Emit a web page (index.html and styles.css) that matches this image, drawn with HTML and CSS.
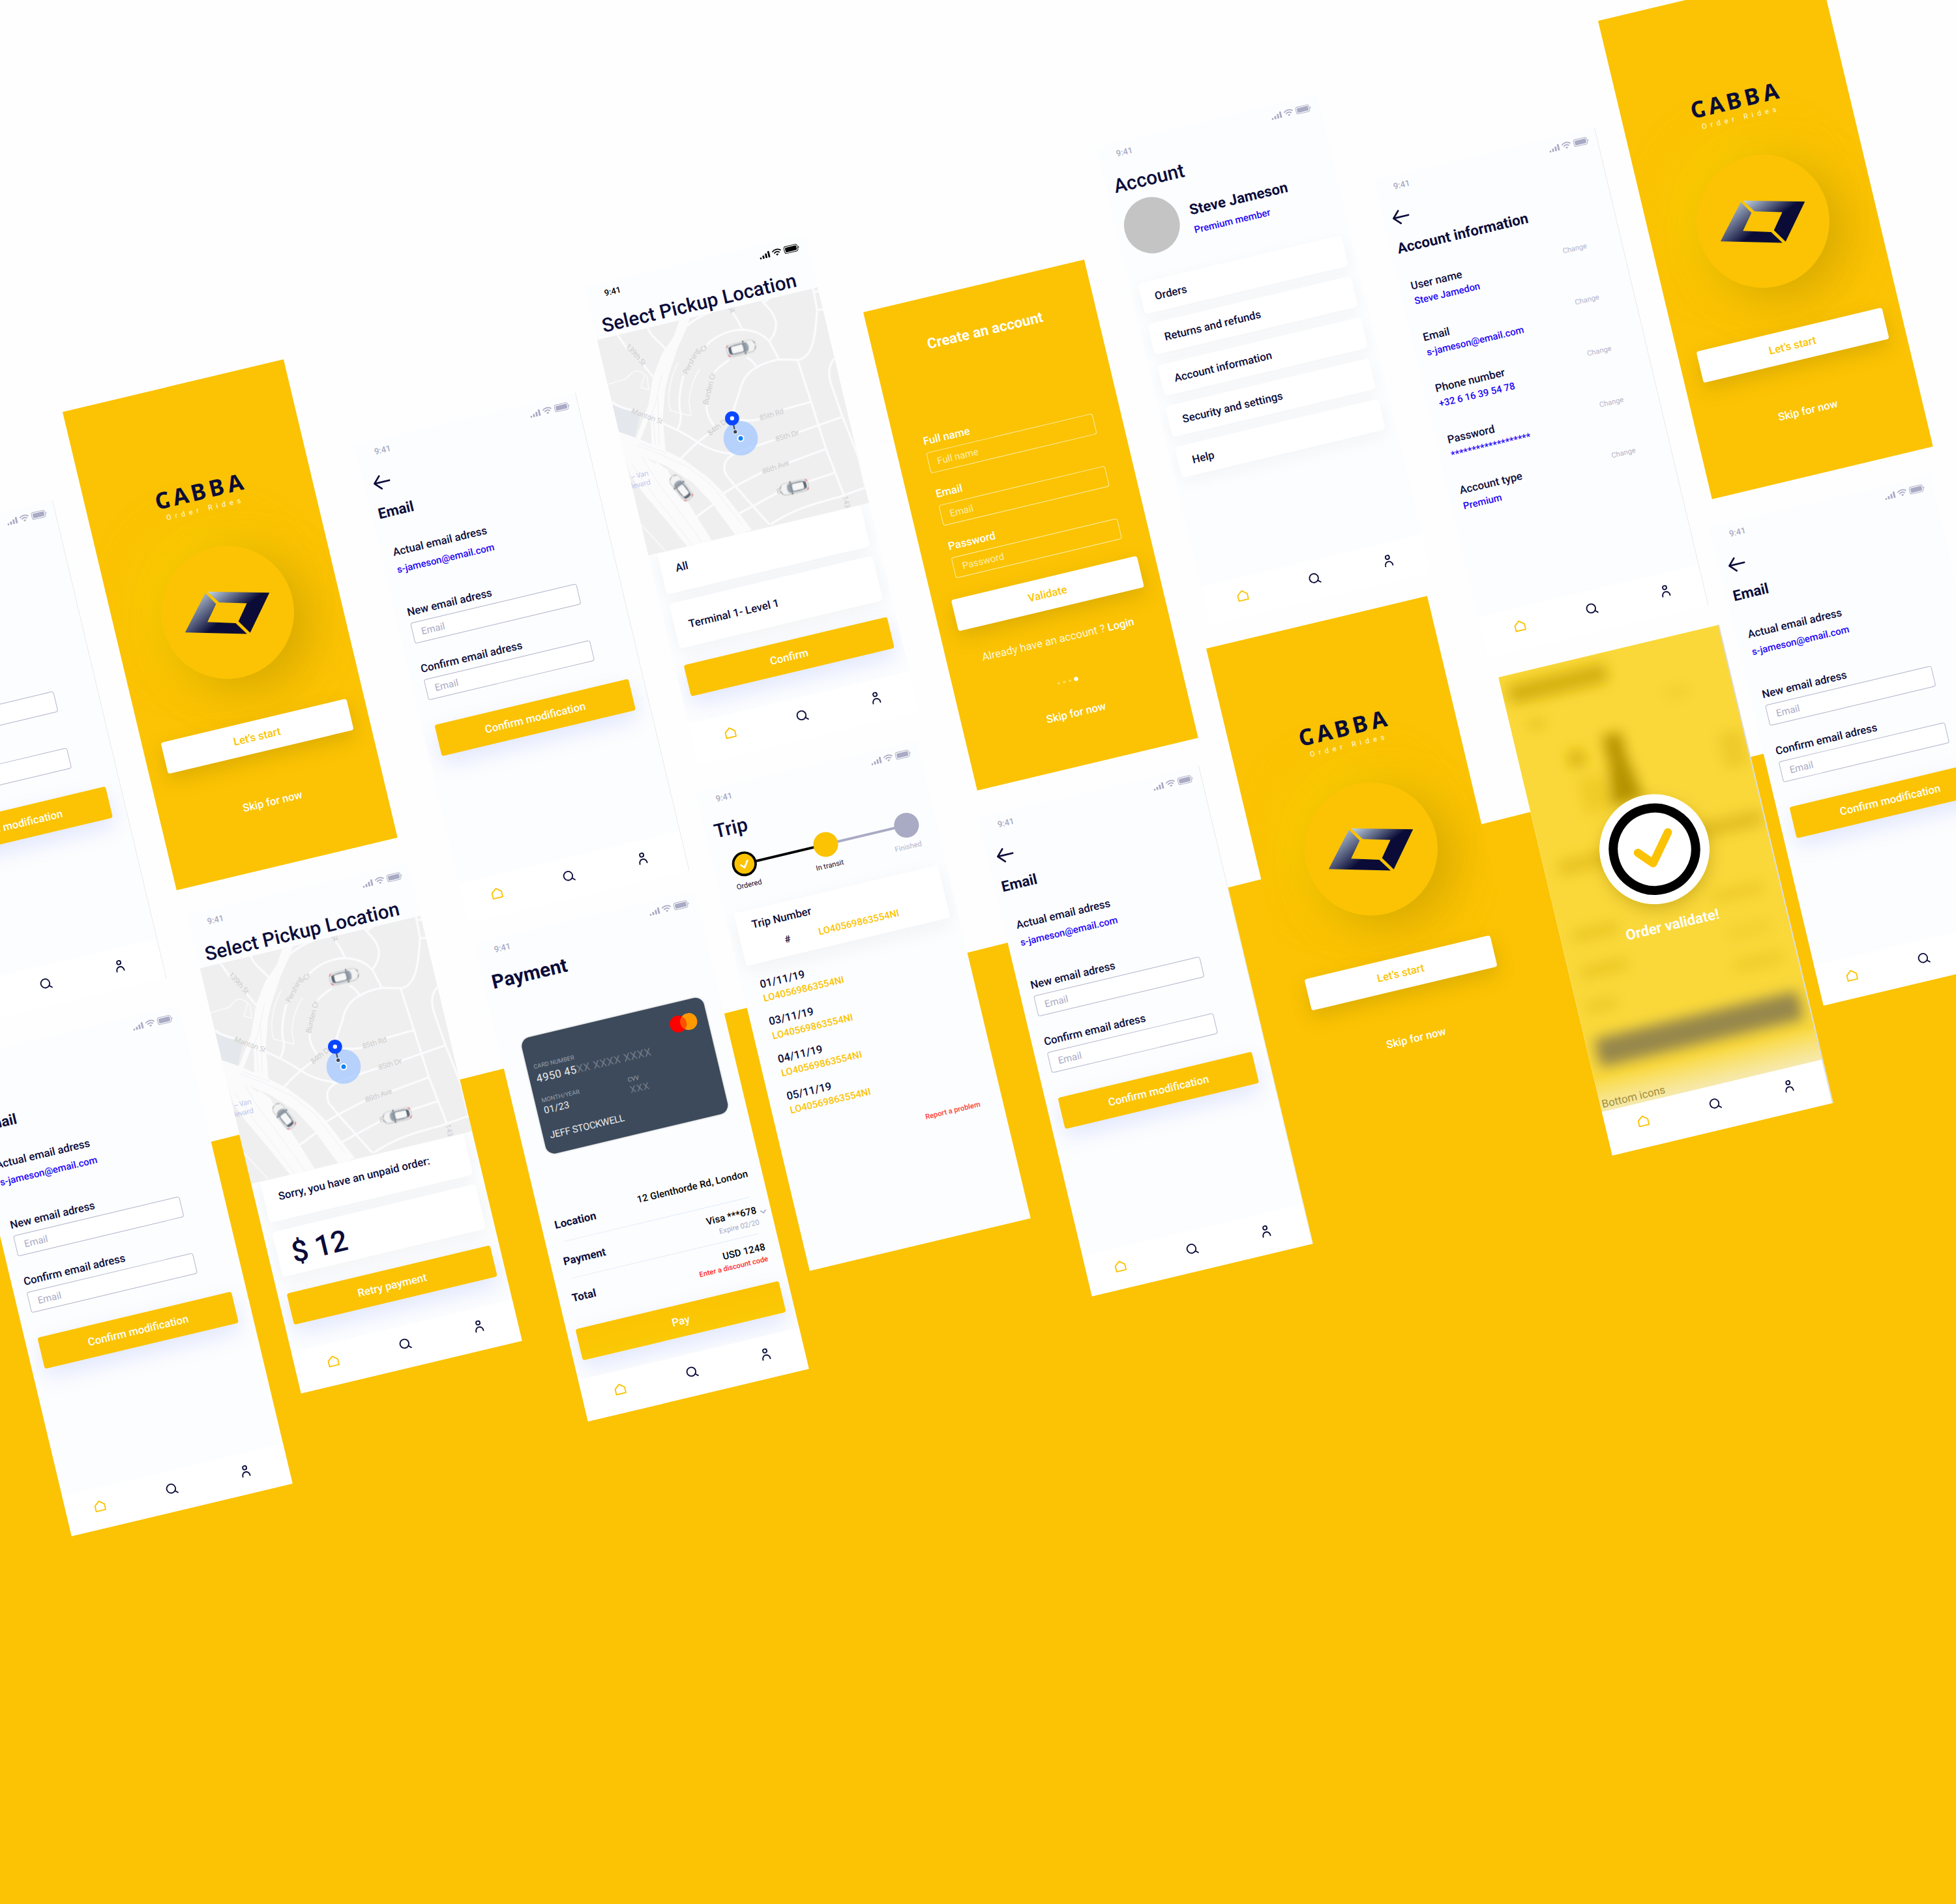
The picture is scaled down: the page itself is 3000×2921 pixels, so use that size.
FILE: index.html
```html
<!DOCTYPE html>
<html lang="en">
<head>
<meta charset="utf-8">
<title>Cabba – Order Rides</title>
<link rel="stylesheet" href="styles.css">
</head>
<body>
<svg class="defs" width="0" height="0" aria-hidden="true">
  <defs>
    <linearGradient id="steel" gradientUnits="userSpaceOnUse" x1="82" y1="70" x2="112" y2="140">
      <stop offset="0" stop-color="#c9dcea"/><stop offset=".75" stop-color="#0a0c37"/>
    </linearGradient>
    <linearGradient id="steel2" gradientUnits="userSpaceOnUse" x1="48" y1="70" x2="82" y2="138">
      <stop offset="0" stop-color="#cfe2ee"/><stop offset=".9" stop-color="#0a0c37"/>
    </linearGradient>
    <linearGradient id="glass" x1="0" x2="1" y1="0" y2="0">
      <stop offset="0" stop-color="#56626f"/><stop offset=".6" stop-color="#6c7884"/><stop offset="1" stop-color="#a9b2bb"/>
    </linearGradient>
    <linearGradient id="fade" x1="0" x2="0" y1="0" y2="1">
      <stop offset="0" stop-color="#f7eebb" stop-opacity="0"/><stop offset="1" stop-color="#f6e9ae"/>
    </linearGradient>
    <filter id="soft" x="-20%" y="-20%" width="140%" height="140%"><feGaussianBlur stdDeviation="11"/></filter>
  </defs>

  <symbol id="status" viewBox="0 0 68 14">
    <g fill="currentColor">
      <rect x="0" y="9.6" width="3" height="3" rx="1"/><rect x="4.8" y="7.4" width="3" height="5.2" rx="1"/><rect x="9.6" y="4.8" width="3" height="7.8" rx="1"/><rect x="14.4" y="1.8" width="3" height="10.8" rx="1"/>
      <path d="M29.5 12.8l-2.3-2.4a3.4 3.4 0 0 1 4.6 0z"/>
      <rect x="44" y="3.2" width="19" height="7.8" rx="1.8"/>
      <path d="M66 5.2c1.6.6 1.6 3.2 0 3.9z"/>
    </g>
    <g fill="none" stroke="currentColor">
      <path d="M24.9 8.2a6.6 6.6 0 0 1 9.2 0" stroke-width="1.9"/><path d="M22.2 5.3a10.6 10.6 0 0 1 14.6 0" stroke-width="1.9"/>
      <rect x="42.2" y="1.4" width="22.6" height="11.4" rx="3.4" stroke-width="1"/>
    </g>
  </symbol>

  <symbol id="home" viewBox="0 0 20 20"><path d="M10 2.2L18 8.6V17.9H2V8.6Z" fill="none" stroke="#fbc303" stroke-width="2" stroke-linejoin="round"/></symbol>
  <symbol id="search" viewBox="0 0 20 20"><g fill="none" stroke="#0b0c3a" stroke-width="2" stroke-linecap="round"><circle cx="9" cy="9.5" r="7.3"/><path d="M14.6 14.6L18.6 18.2"/></g></symbol>
  <symbol id="user" viewBox="0 0 20 20"><g fill="none" stroke="#0b0c3a" stroke-width="2" stroke-linecap="round"><circle cx="10" cy="4.2" r="3.2"/><path d="M3.8 18.4c-.6-9.4 12.4-9.6 12.2 0"/></g></symbol>
  <symbol id="back" viewBox="0 0 30 26"><path d="M28.4 13H2.2M12.6 2L2 13l10.6 11" fill="none" stroke="#0b0c3a" stroke-width="3" stroke-linecap="round" stroke-linejoin="round"/></symbol>

  <symbol id="brand" viewBox="0 0 375 70">
    <g fill="#0a0c37">
      <text class="brand-name" x="126.3 157.3 187.3 218 249.800" y="33.7" text-anchor="middle">CABBA</text>
      <path d="M131.500 24.500h5v8.200l-5 1z"/>
    </g>
    <text class="brand-sub" x="126" y="54" textLength="126">Order Rides</text>
  </symbol>
  <symbol id="logo" viewBox="0 0 220 220">
    <path fill="url(#steel)" d="M86 69.1L185 94.5L138.7 151.6L124.3 128.7L144.7 102.7L100.6 91Z"/>
    <path fill="url(#steel2)" d="M81.9 70.6L95 92.1L74.3 117.9L119.1 130.4L133.3 152L34.3 126.1Z"/>
  </symbol>

  <symbol id="car" viewBox="-75 -40 150 80" overflow="visible">
    <rect x="-68" y="-27" width="136" height="54" rx="23" fill="#f3f3f4" stroke="#cfd1d4" stroke-width="2"/>
    <path d="M-58-14C-60 0-60 0-58 14C-48 23-30 22 26 22C40 14 40-14 26-22C-30-22-48-23-58-14Z" fill="url(#glass)"/>
    <rect x="-46" y="-17" width="56" height="34" rx="7" fill="#f7f7f7"/>
    <path d="M12-31l5 0 2 8h-6zM12 31l5 0 2-8h-6z" fill="#4c545c"/>
    <path d="M60-20q9 9 7 14M60 20q9-9 7-14" fill="none" stroke="#7b8086" stroke-width="3"/>
    <path d="M-66-16q2-7 9-9M-66 16q2 7 9 9" fill="none" stroke="#f0606a" stroke-width="4"/>
  </symbol>

  <symbol id="map" viewBox="0 0 375 366.3">
    <rect width="375" height="366.3" fill="#efefef"/>
    <g transform="matrix(.34903 .08313 -.08313 .34903 10.73 -93.26)">
      <path d="M100 560L190 585L228 615L205 712L130 688Z" fill="#e4e8ec"/>
      <g fill="#fbfbfc">
        <path d="M415 160L462 150L445 205L402 300L362 420L345 490L335 620L348 775L283 745L278 600L232 720L212 712L268 560L290 430L330 325L385 245Z"/>
        <path d="M150 770L240 790L360 870L420 960L565 1190L450 1215L350 1090L240 960L185 880Z"/>
        <path d="M125 680L215 712L340 765L430 810L540 890L610 960L745 1135L670 1160L560 1010L470 915L350 840L240 795L155 785Z"/>
        <path d="M300 820L360 860L372 920L315 890Z"/>
      </g>
      <g fill="none" stroke="#f0f0f5" stroke-width="3">
        <path d="M215 745L330 790L450 845L560 930L700 1110M225 735L350 780"/>
        <path d="M240 800L300 900L420 1060L520 1200M190 830L260 930L360 1060L470 1205"/>
        <path d="M290 600L300 740M312 520L318 740M330 420L300 560L240 715"/>
      </g>
      <g fill="none" stroke="#fbfbfe" stroke-width="10" stroke-linejoin="round">
        <path d="M36 258Q60 240 125 235L170 300M245 375L290 430"/>
        <path d="M265 200C275 245 320 265 350 305M445 195Q500 150 560 130"/>
        <path d="M535 285C580 240 640 215 700 213C770 215 820 250 835 285C850 315 860 330 868 350"/>
        <path d="M655 135Q680 165 700 213M790 80C830 120 855 150 856 190Q856 230 822 270M800 88L830 65"/>
        <path d="M1025 20L1045 120C1040 180 1040 220 1025 275C1010 330 980 350 955 352L868 350C820 360 790 370 765 388C720 410 700 450 690 490C680 530 665 555 658 600"/>
        <path d="M1045 122L1072 120M1030 40L1055 35"/>
        <path d="M720 340Q750 355 768 388M640 352Q590 385 572 410M538 560Q530 600 570 655"/>
        <path d="M430 425C410 500 405 560 418 600Q420 640 402 672"/>
        <path d="M102 545Q130 570 190 583M335 645Q420 680 495 730Q560 775 655 785M550 690Q490 730 415 810"/>
        <path d="M955 352L1017 545L1085 760L1168 975M1017 545L890 580M780 625Q740 635 690 628"/>
        <path d="M1160 615L960 685M850 720L700 770C640 790 600 820 625 880L665 930L825 1110"/>
        <path d="M1085 762L915 825M790 870L665 935L600 975M1125 872L1005 912M860 965L750 1025L670 1068"/>
        <path d="M1268 940L1140 985C1000 1020 920 1050 830 1110M570 1015L475 1085"/>
        <path d="M1125 345C1090 385 1098 430 1110 465L1160 610L1235 800L1270 950"/>
      </g>
      <g fill="none" stroke="#fafafd" stroke-width="5">
        <path d="M80 465L165 440C200 400 210 395 240 410L262 430L270 490L235 480L250 425"/>
        <path d="M405 365C370 430 350 520 370 585L465 610L455 545Q465 450 505 395"/>
        <path d="M235 1110L345 1230"/>
      </g>
      <g class="streets">
        <text transform="translate(163 290) rotate(49)">139th St</text>
        <text transform="translate(188 596) rotate(20)">Manton St</text>
        <text transform="translate(446 420) rotate(-62)">Pershing</text>
        <text transform="translate(520 318) rotate(-45)">Cr</text>
        <text transform="translate(541 560) rotate(-76)">Burden Cr</text>
        <text transform="translate(552 702) rotate(-38)">84th Dr</text>
        <text transform="translate(784 630) rotate(-16)">85th Rd</text>
        <text transform="translate(858 728) rotate(-17)">85th Dr</text>
        <text transform="translate(797 877) rotate(-19)">86th Ave</text>
        <text transform="translate(862 970) rotate(-17)">8</text>
        <text transform="translate(1162 982) rotate(77)">143r</text>
        <text transform="translate(636 112) rotate(62)">St</text>
        <g class="junction"><text transform="translate(178 905) rotate(-13)">l – Van</text><text transform="translate(192 945) rotate(-13)">levard</text></g>
      </g>
      <g class="cars">
        <use href="#car" x="-75" y="-40" width="150" height="80" transform="translate(695 298) rotate(-14) scale(.98 1)"/>
        <use href="#car" x="-75" y="-40" width="150" height="80" transform="translate(940 938) rotate(167) scale(.96)"/>
        <use href="#car" x="-75" y="-40" width="150" height="80" transform="translate(418 940) rotate(-128) scale(.95)"/>
      </g>
      <circle cx="693" cy="713" r="79" fill="#a9caff" fill-opacity=".82"/>
      <path d="M660 650L667 682" stroke="#3e4654" stroke-width="6"/>
      <circle cx="668" cy="683" r="10" fill="#3e4654" stroke="#dfe9f8" stroke-width="4"/>
      <circle cx="693" cy="713" r="13.5" fill="#0f82f5" stroke="#fff" stroke-width="6"/>
      <circle cx="653.5" cy="621" r="21" fill="#fff" stroke="#0a46ff" stroke-width="23"/>
    </g>
  </symbol>
</svg>

<main class="board">
  <div class="slope"></div>

  <section class="screen email ruled at-email-1">
    <header class="status"><span>9:41</span><svg class="status-icons"><use href="#status"/></svg></header>
    <svg class="back"><use href="#back"/></svg>
    <h2 class="heading">Email</h2>
    <div class="form">
      <p class="label">Actual email adress</p><p class="value">s-jameson@email.com</p>
      <p class="label new">New email adress</p><div class="field">Email</div>
      <p class="label again">Confirm email adress</p><div class="field">Email</div>
      <div class="button">Confirm modification</div>
    </div>
    <nav class="nav"><svg><use href="#home"/></svg><svg><use href="#search"/></svg><svg><use href="#user"/></svg></nav>
  </section>

  <section class="screen splash at-splash-1">
    <svg class="brand"><use href="#brand"/></svg>
    <div class="disc"><svg><use href="#logo"/></svg></div>
    <div class="button plain">Let’s start</div>
    <p class="skip">Skip for now</p>
  </section>

  <section class="screen email ruled at-email-2">
    <header class="status"><span>9:41</span><svg class="status-icons"><use href="#status"/></svg></header>
    <svg class="back"><use href="#back"/></svg>
    <h2 class="heading">Email</h2>
    <div class="form">
      <p class="label">Actual email adress</p><p class="value">s-jameson@email.com</p>
      <p class="label new">New email adress</p><div class="field">Email</div>
      <p class="label again">Confirm email adress</p><div class="field">Email</div>
      <div class="button">Confirm modification</div>
    </div>
    <nav class="nav"><svg><use href="#home"/></svg><svg><use href="#search"/></svg><svg><use href="#user"/></svg></nav>
  </section>

  <section class="screen pickup at-pickup-1">
    <header class="status dark"><span>9:41</span><svg class="status-icons"><use href="#status"/></svg></header>
    <h1 class="title">Select Pickup Location</h1>
    <svg class="map"><use href="#map"/></svg>
    <div class="card top">All</div>
    <div class="card">Terminal 1- Level 1</div>
    <div class="button">Confirm</div>
    <nav class="nav"><svg><use href="#home"/></svg><svg><use href="#search"/></svg><svg><use href="#user"/></svg></nav>
  </section>

  <section class="screen signup at-signup">
    <h2>Create an account</h2>
    <div class="group"><p class="label">Full name</p><div class="field">Full name</div></div>
    <div class="group"><p class="label">Email</p><div class="field">Email</div></div>
    <div class="group"><p class="label">Password</p><div class="field">Password</div></div>
    <div class="button plain">Validate</div>
    <p class="login">Already have an account ? <b>Login</b></p>
    <div class="dots"><i></i><i></i><i></i><i class="on"></i></div>
    <p class="skip">Skip for now</p>
  </section>

  <section class="screen account at-account">
    <header class="status"><span>9:41</span><svg class="status-icons"><use href="#status"/></svg></header>
    <h1 class="title">Account</h1>
    <div class="profile">
      <div class="avatar"></div>
      <div><h2>Steve Jameson</h2><p class="value">Premium member</p></div>
    </div>
    <ul class="menu"><li>Orders</li><li>Returns and refunds</li><li>Account information</li><li>Security and settings</li><li>Help</li></ul>
    <nav class="nav"><svg><use href="#home"/></svg><svg><use href="#search"/></svg><svg><use href="#user"/></svg></nav>
  </section>

  <section class="screen info ruled at-info">
    <header class="status"><span>9:41</span><svg class="status-icons"><use href="#status"/></svg></header>
    <svg class="back"><use href="#back"/></svg>
    <h2 class="heading">Account information</h2>
    <dl class="details">
      <div><dt>User name<span>Change</span></dt><dd>Steve Jamedon</dd></div>
      <div><dt>Email<span>Change</span></dt><dd>s-jameson@email.com</dd></div>
      <div><dt>Phone number<span>Change</span></dt><dd>+32 6 16 39 54 78</dd></div>
      <div><dt>Password<span>Change</span></dt><dd>*******************</dd></div>
      <div><dt>Account type<span>Change</span></dt><dd>Premium</dd></div>
    </dl>
    <nav class="nav"><svg><use href="#home"/></svg><svg><use href="#search"/></svg><svg><use href="#user"/></svg></nav>
  </section>

  <section class="screen splash at-splash-2">
    <svg class="brand"><use href="#brand"/></svg>
    <div class="disc"><svg><use href="#logo"/></svg></div>
    <div class="button plain">Let’s start</div>
    <p class="skip">Skip for now</p>
  </section>

  <section class="screen email at-email-3">
    <header class="status"><span>9:41</span><svg class="status-icons"><use href="#status"/></svg></header>
    <svg class="back"><use href="#back"/></svg>
    <h2 class="heading">Email</h2>
    <div class="form">
      <p class="label">Actual email adress</p><p class="value">s-jameson@email.com</p>
      <p class="label new">New email adress</p><div class="field">Email</div>
      <p class="label again">Confirm email adress</p><div class="field">Email</div>
      <div class="button">Confirm modification</div>
    </div>
    <nav class="nav"><svg><use href="#home"/></svg><svg><use href="#search"/></svg><svg><use href="#user"/></svg></nav>
  </section>

  <section class="screen pickup at-pickup-2">
    <header class="status"><span>9:41</span><svg class="status-icons"><use href="#status"/></svg></header>
    <h1 class="title">Select Pickup Location</h1>
    <svg class="map"><use href="#map"/></svg>
    <div class="card top">Sorry, you have an unpaid order:</div>
    <div class="card price">$ 12</div>
    <div class="button">Retry payment</div>
    <nav class="nav"><svg><use href="#home"/></svg><svg><use href="#search"/></svg><svg><use href="#user"/></svg></nav>
  </section>

  <section class="screen payment at-payment">
    <header class="status"><span>9:41</span><svg class="status-icons"><use href="#status"/></svg></header>
    <h1 class="title">Payment</h1>
    <div class="bank-card">
      <svg class="rings" viewBox="0 0 46 28"><circle cx="14" cy="14" r="14" fill="#f00"/><circle cx="32" cy="14" r="14" fill="#ff9900"/><path d="M23 3.3a14 14 0 0 1 0 21.4a14 14 0 0 1 0-21.4z" fill="#ff5000"/></svg>
      <p class="tiny">CARD NUMBER</p>
      <p class="digits">4950 45<span>XX XXXX XXXX</span></p>
      <div class="pair">
        <div><p class="tiny">MONTH/YEAR</p><p class="small">01/23</p></div>
        <div><p class="tiny">CVV</p><p class="small hidden">XXX</p></div>
      </div>
      <p class="small holder">JEFF STOCKWELL</p>
    </div>
    <div class="summary">
      <div class="row"><span>Location</span><div><p>12 Glenthorde Rd, London</p></div></div>
      <div class="row"><span>Payment</span><div><p>Visa ***678</p><p class="note">Expire 02/20</p></div><svg class="chevron" viewBox="0 0 12 8"><path d="M1.5 1.5L6 6L10.5 1.5" fill="none" stroke="#a9aac8" stroke-width="1.8"/></svg></div>
      <div class="row"><span>Total</span><div><p>USD 1248</p><p class="note alert">Enter a discount code</p></div></div>
    </div>
    <div class="button">Pay</div>
    <nav class="nav"><svg><use href="#home"/></svg><svg><use href="#search"/></svg><svg><use href="#user"/></svg></nav>
  </section>

  <section class="screen trip at-trip">
    <header class="status"><span>9:41</span><svg class="status-icons"><use href="#status"/></svg></header>
    <h1 class="title">Trip</h1>
    <svg class="track" viewBox="0 0 375 50">
      <path d="M70 25H170" stroke="#000" stroke-width="4"/><path d="M208 25H307" stroke="#a9aac4" stroke-width="4"/>
      <circle cx="51" cy="25" r="18.5" fill="#fbc303" stroke="#000" stroke-width="4"/>
      <path d="M45 26L50 31L57 21" fill="none" stroke="#fff" stroke-width="3" stroke-linecap="round" stroke-linejoin="round"/>
      <circle cx="189" cy="25" r="20.5" fill="#fbc303"/><circle cx="326" cy="25" r="20.5" fill="#a9aac4"/>
    </svg>
    <div class="steps"><span>Ordered</span><span>In transit</span><span>Finished</span></div>
    <div class="number"><p>Trip Number</p><div><span>#</span><span>LO40569863554NI</span></div></div>
    <ul class="history">
      <li>01/11/19<span>LO40569863554NI</span></li>
      <li>03/11/19<span>LO40569863554NI</span></li>
      <li>04/11/19<span>LO40569863554NI</span></li>
      <li>05/11/19<span>LO40569863554NI</span></li>
    </ul>
    <p class="report">Report a problem</p>
  </section>

  <section class="screen email ruled at-email-4">
    <header class="status"><span>9:41</span><svg class="status-icons"><use href="#status"/></svg></header>
    <svg class="back"><use href="#back"/></svg>
    <h2 class="heading">Email</h2>
    <div class="form">
      <p class="label">Actual email adress</p><p class="value">s-jameson@email.com</p>
      <p class="label new">New email adress</p><div class="field">Email</div>
      <p class="label again">Confirm email adress</p><div class="field">Email</div>
      <div class="button">Confirm modification</div>
    </div>
    <nav class="nav"><svg><use href="#home"/></svg><svg><use href="#search"/></svg><svg><use href="#user"/></svg></nav>
  </section>

  <section class="screen splash at-splash-3">
    <svg class="brand"><use href="#brand"/></svg>
    <div class="disc"><svg><use href="#logo"/></svg></div>
    <div class="button plain">Let’s start</div>
    <p class="skip">Skip for now</p>
  </section>

  <section class="screen done at-done">
    <svg class="haze" viewBox="0 0 375 738">
      <rect width="375" height="738" fill="#fad83a"/>
      <rect y="680" width="375" height="58" fill="url(#fade)"/>
      <g filter="url(#soft)">
        <rect x="10" y="17" width="166" height="32" fill="#d4b00a"/>
        <rect x="28" y="82" width="30" height="16" fill="#e8c420"/>
        <rect x="262" y="84" width="40" height="16" fill="#f2ce2e"/>
        <circle cx="95" cy="161" r="16" fill="#dcb80c"/>
        <rect x="144" y="134" width="32" height="42" fill="#b89400"/>
        <path d="M146 176L176 176L188 250H132Z" fill="#b59300"/>
        <rect x="88" y="195" width="44" height="60" fill="#f0cc28"/>
        <rect x="330" y="175" width="40" height="60" fill="#eecb2c"/>
        <rect x="24" y="318" width="96" height="26" fill="#e8c422"/>
        <rect x="262" y="312" width="108" height="26" fill="#e2be20"/>
        <rect x="20" y="437" width="78" height="18" fill="#e9c624"/><rect x="260" y="428" width="86" height="18" fill="#edca28"/>
        <rect x="20" y="499" width="78" height="18" fill="#e9c624"/><rect x="270" y="492" width="72" height="18" fill="#f2cf2e"/>
        <rect x="16" y="557" width="50" height="18" fill="#ebc826"/><rect x="268" y="547" width="82" height="18" fill="#edca28"/>
        <rect x="15" y="618" width="345" height="48" rx="4" fill="#96874c"/>
      </g>
    </svg>
    <svg class="badge" viewBox="0 0 182 182"><circle cx="91" cy="91" r="91" fill="#fff"/><circle cx="91" cy="91" r="68" fill="none" stroke="#000" stroke-width="15"/><path d="M63 90.5L83.5 113L119 69" fill="none" stroke="#fbc303" stroke-width="13.5" stroke-linecap="round" stroke-linejoin="round"/></svg>
    <h2>Order validate!</h2>
    <p class="caption">Bottom icons</p>
    <nav class="nav"><svg><use href="#home"/></svg><svg><use href="#search"/></svg><svg><use href="#user"/></svg></nav>
  </section>

  <section class="screen email at-email-5">
    <header class="status"><span>9:41</span><svg class="status-icons"><use href="#status"/></svg></header>
    <svg class="back"><use href="#back"/></svg>
    <h2 class="heading">Email</h2>
    <div class="form">
      <p class="label">Actual email adress</p><p class="value">s-jameson@email.com</p>
      <p class="label new">New email adress</p><div class="field">Email</div>
      <p class="label again">Confirm email adress</p><div class="field">Email</div>
      <div class="button">Confirm modification</div>
    </div>
    <nav class="nav"><svg><use href="#home"/></svg><svg><use href="#search"/></svg><svg><use href="#user"/></svg></nav>
  </section>
</main>
</body>
</html>
```
FILE: styles.css
```css
:root {
  --yellow: #fbc303;
  --ink: #0b0c3a;
  --muted: #a9aac4;
  --link: #1e05f5;
}
* { box-sizing: border-box; margin: 0; padding: 0; }
body { width: 3000px; height: 2921px; overflow: hidden; background: #fff; font-family: Roboto, "Liberation Sans", sans-serif; color: var(--ink); }
ul { list-style: none; }
.defs { position: absolute; }
.board { position: relative; width: 3000px; height: 2921px; overflow: hidden; background: #fefefe; }
.slope { height: 100%; background: var(--yellow); clip-path: polygon(0 1832.6px, 3000px 1082.6px, 3000px 100%, 0 100%); }

/* every phone screen is a tilted tile pinned on the board */
.screen {
  position: absolute;
  display: flex;
  flex-direction: column;
  width: 375px;
  height: 811.5px;
  overflow: hidden;
  background: #fcfdfe;
  transform-origin: 0 0;
  transform: rotate(-13.4deg) scale(.929);
}
.screen > * { flex: none; }
.ruled::after { content: ""; position: absolute; inset: 0 0 0 auto; width: 1.4px; background: #e2e5e6; }

.at-email-1 { left: -257.6px; top: 847.5px; }
.at-splash-1 { left: 95.8px; top: 631.6px; }
.at-email-2 { left: 543.5px; top: 683.4px; }
.at-pickup-1 { left: 895.9px; top: 439.8px; }
.at-signup { left: 1324.1px; top: 479.2px; }
.at-account { left: 1680.8px; top: 225.9px; }
.at-info { left: 2106.6px; top: 276.4px; }
.at-splash-3 { left: 2451.1px; top: 32px; }
.at-email-3 { left: -65px; top: 1623.4px; }
.at-pickup-2 { left: 286.5px; top: 1404px; }
.at-payment { left: 726.7px; top: 1447px; }
.at-trip { left: 1066.7px; top: 1216.2px; }
.at-email-4 { left: 1499.5px; top: 1254.5px; }
.at-splash-2 { left: 1849.6px; top: 995.4px; }
.at-done { left: 2298.2px; top: 1039.3px; }
.at-email-5 { left: 2621.6px; top: 808.7px; }

/* status bar */
.status { display: flex; align-items: center; justify-content: space-between; height: 36px; padding: 0 14px 0 30px; font-size: 14px; line-height: 16px; font-weight: 500; color: var(--muted); }
.email .status, .info .status { padding-left: 29px; }
.status.dark { color: #000; }
.status-icons { width: 68px; height: 14px; }

/* type */
.title { font-size: 32px; line-height: 36px; font-weight: 500; margin: 16.4px 0 0 13.8px; }
.back { width: 29px; height: 25px; margin: 20.5px 0 0 14.5px; }
.heading { font-size: 24px; line-height: 28px; font-weight: 700; margin: 24.3px 0 0 11.5px; }
.label { font-size: 18px; line-height: 20px; font-weight: 500; }
.value { font-size: 16px; line-height: 20px; font-weight: 500; color: var(--link); }
.skip { font-size: 18px; line-height: 20px; font-weight: 500; color: #fff; text-align: center; }

/* controls */
.field { width: 282px; height: 35px; padding-left: 14px; border: 1.3px solid #b0b1ca; border-radius: 4px; background: #fff; font-size: 16px; line-height: 33px; color: var(--muted); }
.button { width: 345px; height: 53px; margin-left: 15px; border-radius: 4px; background: var(--yellow); color: #fff; font-size: 18px; line-height: 54px; font-weight: 500; text-align: center; box-shadow: 0 14px 34px rgba(90, 120, 255, .16); }
.button.plain { width: 315px; margin-left: 30.5px; background: #fff; color: var(--yellow); box-shadow: 0 12px 30px rgba(140, 110, 0, .25); }

/* bottom navigation */
.nav { display: flex; height: 70px; margin-top: auto; padding: 20.3px 0 0 54.2px; background: #fff; position: relative; }
.nav svg { width: 20px; height: 20px; margin-right: 101.6px; }
.nav svg:last-child { margin: 0 0 0 4px; }

/* email */
.email .nav { height: 68px; padding: 20px 0 0 47.2px; }
.form { padding-left: 20.5px; }
.form .label { margin-top: 43px; }
.form .value { margin-top: 10.4px; }
.form .new { margin-top: 51.6px; }
.form .again { margin-top: 33.4px; }
.form .field { margin-top: 8px; margin-left: .4px; }
.form .button { width: 329.5px; margin: 41.4px 0 0 .4px; font-weight: 500; }

/* splash */
.splash, .signup { background: var(--yellow); }
.brand { width: 375px; height: 70px; margin-top: 160px; }
.brand-name { font: 700 37.5px "Noto Sans", sans-serif; }
.brand-sub { font: 400 12px Roboto, sans-serif; fill: #fffbe8; }
.disc { width: 220px; height: 220px; margin: 44.7px 0 0 77.5px; border-radius: 50%; background: var(--yellow); box-shadow: 22px 22px 70px rgba(190, 150, 0, .58), -22px -22px 80px rgba(250, 218, 0, .5); }
.disc svg { display: block; width: 220px; height: 220px; }
.splash .button { margin-top: 74px; position: relative; }
.splash .skip { margin-top: 74.6px; padding-left: 1px; }

/* sign up */
.signup h2 { margin: 62.4px 0 105.2px; text-align: center; font-size: 24px; line-height: 28px; font-weight: 700; color: #fff; padding-left: 2px; }
.group { margin: 25.2px 0 0 47px; color: #fff; }
.group .label { margin-bottom: 9.1px; }
.group .field { background: none; border-color: #fef0b8; color: #fdedb0; }
.signup .button { margin-top: 32.4px; }
.login { margin-top: 41.4px; font-size: 18px; line-height: 20px; text-align: center; color: #fff7dc; }
.login b { font-weight: 500; color: #fff; }
.dots { display: flex; align-items: center; justify-content: center; gap: 5px; height: 8px; margin-top: 56.6px; }
.dots i { width: 4.5px; height: 4.5px; border-radius: 50%; background: #fddf5c; }
.dots .on { width: 7px; height: 7px; background: #fff; }
.signup .skip { margin-top: 39.9px; padding-left: 2px; }

/* pickup */
.pickup .title { white-space: nowrap; margin-top: 15.9px; letter-spacing: .1px; }
.map { width: 375px; height: 366.3px; margin-top: 2.6px; z-index: 1; }
.streets { font: 500 33px "Open Sans", sans-serif; fill: #c9c9cb; letter-spacing: -.8px; }
.junction { fill: #bac0ea; }
.cars { filter: drop-shadow(0 1px 1px rgba(0, 0, 0, .35)); }
.card { width: 345px; height: 76px; margin: 16px 0 0 15px; padding: 30px 0 0 24px; border-radius: 6px; background: #fff; font-size: 18px; line-height: 20px; font-weight: 500; box-shadow: 0 6px 30px rgba(20, 35, 70, .05); }
.card.top { height: 69.2px; margin-top: 0; padding-top: 20.5px; border-radius: 0 0 6px 6px; }
.card.price { padding-top: 13px; font-size: 48px; line-height: 56px; }
.pickup .button { margin-top: 28px; }

/* account */
.profile { display: flex; margin: 11.6px 0 42.7px 13.7px; height: 92.6px; gap: 20px; }
.avatar { width: 92.6px; height: 92.6px; border-radius: 50%; background: #c4c4c4; }
.profile h2 { margin-top: 23.3px; font-size: 24px; line-height: 28px; font-weight: 700; }
.profile .value { margin-top: 9.3px; }
.account .nav { height: 66px; }
.menu { display: flex; flex-direction: column; gap: 17.2px; padding-left: 14.5px; }
.menu li { width: 345px; height: 52px; padding-left: 23px; border-radius: 6px; background: #fff; font-size: 18px; line-height: 53px; font-weight: 500; box-shadow: 0 8px 28px rgba(20, 35, 70, .045); }
.menu li:nth-child(n+4) { margin-left: -2.5px; }

/* account information */
.details { display: flex; flex-direction: column; gap: 40.6px; padding: 41.5px 58px 0 19px; }
.details dt { display: flex; justify-content: space-between; align-items: baseline; font-size: 18px; line-height: 20px; font-weight: 500; }
.details dt span { font-size: 12px; font-weight: 400; color: #b3b4cc; }
.details dd { margin-top: 4.2px; font-size: 16px; line-height: 20px; font-weight: 500; color: var(--link); }

/* payment */
.payment .title { font-weight: 700; }
.bank-card { position: relative; width: 309.5px; height: 197px; margin: 83.6px 0 0 36.6px; padding: 44px 0 0 11.8px; border-radius: 15px; background: #3d4a5b; color: #e8eaee; box-shadow: 0 0 3px rgba(60, 60, 60, .4); }
.rings { position: absolute; left: 246px; top: 22px; width: 46px; height: 28px; }
.tiny { font-size: 10px; line-height: 12px; color: #98a1ab; }
.digits { margin-top: 3.6px; font-size: 18px; line-height: 20px; letter-spacing: .4px; white-space: nowrap; }
.digits span, .hidden { color: #707b87; }
.hidden { letter-spacing: 1px; }
.small { margin-top: 1.1px; font-size: 16px; line-height: 20px; }
.pair { display: grid; grid-template-columns: 146px 1fr; margin-top: 21.5px; }
.holder { margin-top: 21.7px; letter-spacing: -.3px; }
.summary { margin-top: 83px; }
.row { position: relative; display: flex; justify-content: space-between; height: 62px; padding: 0 23.7px 0 21.7px; font-size: 18px; line-height: 20px; font-weight: 500; }
.row + .row::before { content: ""; position: absolute; left: 30px; right: 30px; top: -.5px; height: 1px; background: #dfecfa; }
.row > span { margin-top: 21.9px; font-weight: 700; }
.row div { margin-top: 13.5px; text-align: right; font-size: 16px; letter-spacing: .1px; color: #000; }
.row .note { margin-top: 1.7px; font-size: 12px; line-height: 16px; font-weight: 400; letter-spacing: 0; color: var(--muted); }
.row .alert { font-weight: 500; color: #ff2a2a; }
.chevron { position: absolute; right: 7px; top: 24.5px; width: 12px; height: 8px; }
.payment .button { margin-top: 21px; background: linear-gradient(#fbc303, #fbc906); }

/* trip */
.trip .title { margin-left: 15px; }
.track { width: 375px; height: 50px; margin-top: 20px; }
.steps { display: grid; grid-template-columns: 134.7px 134px 1fr; margin-top: 2px; padding-left: 29.6px; font-size: 12px; line-height: 16px; }
.steps :nth-child(3) { color: #b3b4cc; }
.number { width: 346px; height: 89.5px; margin: 32.2px 0 0 15px; padding: 15.4px 0 0 24.6px; background: #fff; border-radius: 4px; font-size: 18px; line-height: 20px; font-weight: 500; box-shadow: 0 10px 32px rgba(20, 35, 70, .05); }
.number div { display: grid; grid-template-columns: 57.3px 1fr; margin-top: 16.7px; padding-left: 47.2px; font-size: 16px; }
.number div span:last-child { letter-spacing: .1px; color: var(--yellow); }
.history { display: flex; flex-direction: column; gap: 19.1px; margin: 25px 0 0 30px; font-size: 18px; line-height: 20px; font-weight: 500; }
.history span { display: block; margin-top: 4.2px; font-size: 16px; letter-spacing: .1px; color: var(--yellow); }
.report { margin: 43.7px 37.4px 0 0; text-align: right; font-size: 12px; line-height: 16px; font-weight: 500; color: #ff3b3b; }

/* order validated */
.done { background: #fff; }
.done::after { content: ""; position: absolute; inset: 0 0 0 auto; width: 2px; background: #d9dce8; }
.haze { position: absolute; left: 0; top: 0; width: 375px; height: 738px; }
.badge { position: relative; width: 182px; height: 182px; margin: 244.5px 0 0 94px; border-radius: 50%; box-shadow: 0 10px 24px rgba(150, 120, 0, .35); }
.done h2 { position: relative; margin: 23.3px 0 0; padding-right: 5px; text-align: center; font-size: 24px; line-height: 28px; font-weight: 700; color: #fff; }
.caption { position: relative; margin: auto 0 0 3px; padding-bottom: 2px; font-size: 18px; line-height: 20px; color: #a08f3e; }
.done .nav { height: 73.5px; margin-top: 0; padding-left: 53.2px; }
```
